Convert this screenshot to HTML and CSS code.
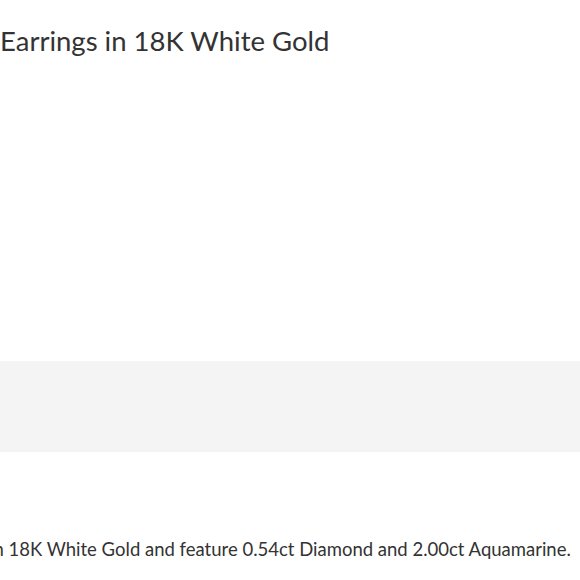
FILE: index.html
```html
<!DOCTYPE html>
<html lang="en">
<head>
<meta charset="utf-8"/>
<meta name="viewport" content="width=device-width,initial-scale=1"/>
<title>Earrings in 18K White Gold</title>
<link rel="stylesheet" href="styles.css">
</head>
<body>
<div class="product">
  <h1 class="name">Earrings in 18K White Gold</h1>
  <div class="gallery"></div>
  <div class="strip"></div>
  <p class="desc"><span class="cut">in</span> 18K White Gold and feature 0.54ct Diamond and 2.00ct Aquamarine.</p>
</div>
</body>
</html>
```
FILE: styles.css
```css
body{margin:0;background:#fff;color:#333;font-family:Lato,"Open Sans",Arial,sans-serif;overflow:hidden}
.product{display:flex;flex-direction:column}
.name{margin:24px 0 0 0;font-size:27.5px;font-weight:400;line-height:1.2;color:#333}
.gallery{height:304px}
.strip{height:91px;background:#f4f4f4}
.desc{margin:84px 0 0 -11px;font-size:18.5px;line-height:1.5;white-space:nowrap;color:#333}
```
